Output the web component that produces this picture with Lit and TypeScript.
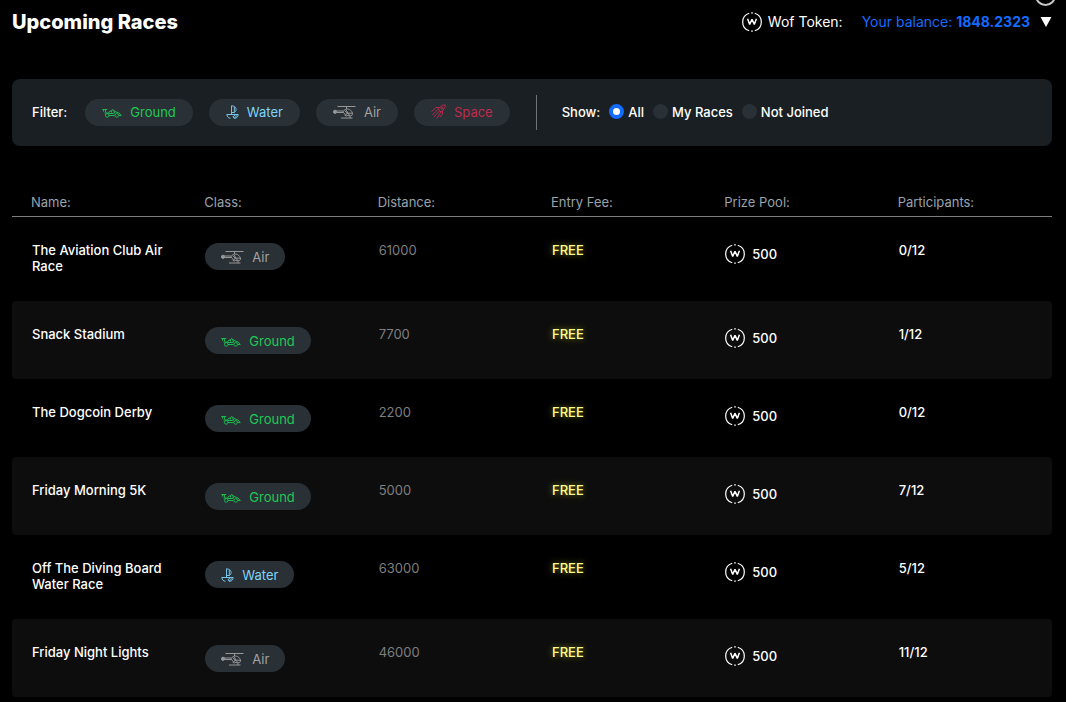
import { LitElement, html, css, svg } from "lit";
import { customElement, property, state } from "lit/decorators.js";

type RaceClass = "ground" | "water" | "air" | "space";

interface Race {
  name: string;
  kind: RaceClass;
  distance: number;
  prize: number;
  joined: number;
}

const LABELS: Record<RaceClass, string> = {
  ground: "Ground",
  water: "Water",
  air: "Air",
  space: "Space",
};

const RACES: Race[] = [
  { name: "The Aviation Club Air Race", kind: "air", distance: 61000, prize: 500, joined: 0 },
  { name: "Snack Stadium", kind: "ground", distance: 7700, prize: 500, joined: 1 },
  { name: "The Dogcoin Derby", kind: "ground", distance: 2200, prize: 500, joined: 0 },
  { name: "Friday Morning 5K", kind: "ground", distance: 5000, prize: 500, joined: 7 },
  { name: "Off The Diving Board Water Race", kind: "water", distance: 63000, prize: 500, joined: 5 },
  { name: "Friday Night Lights", kind: "air", distance: 46000, prize: 500, joined: 11 },
];

const ICONS = {
  ground: { w: 20, h: 14, art: svg`
    <path d="M0.3 4.5H5.2M1.5 4.5V6.5M3.2 4.8L3.8 7.5M2.5 8H6.5L8 6H9M9.5 7.5V5.5L11 4.5L13 6.5L17 8L19.2 10.5H17M7 10.5H12.5M6.5 8.5H11L13 7.8M11.5 5L12.5 8" />
    <circle cx="5.2" cy="10.4" r="1.8" /><circle cx="14.7" cy="10.4" r="1.8" />` },
  water: { w: 13, h: 14, art: svg`
    <path d="M5.5 0.8V9.3M5.5 0.8C11 1.2 11 5.5 8.5 7.5H5.5M8.3 1.8V7.5M0.8 9.5H12.2C12 12 10.5 13.2 9 13.2H8M0.8 9.5C1.2 12 2.5 13.2 4.5 13.2M7 11.5L9.5 10M8 13.2L11 10.5M7 11.5L8 13.2" />` },
  air: { w: 23, h: 14, art: svg`
    <path d="M4.5 1.5H22.5M13.5 1.5V4M2 6H10.5M3 7.5H10.5M8 13H19.5M11.5 10L13.5 11.2M17 10.8V13" />
    <path d="M10.2 6.5C12 3.5 15.5 3.5 17.5 5.2C19.5 7 20.2 9.2 18.8 10.3C15.5 11.5 11 10 10.2 6.5ZM13 4.8L15 8.2H19.2M15 8.2L12.8 9.2M12 6L17 10.5" />
    <circle cx="2" cy="6.8" r="1.6" fill="currentColor" />` },
  space: { w: 15, h: 15, art: svg`
    <path d="M14.3 0.8C11.8 0.8 9 2.5 7.2 5.2L10 8C12.8 6.2 14.3 3.3 14.3 0.8ZM7.2 5.2L1.2 11.2M10 8L5.8 14.5M8.6 6.8L2.8 13.2M8.3 3.5H5L0.4 7.8M11.5 7V10L9 13" />
    <circle cx="11" cy="4.2" r="1" />` },
};

const classIcon = (kind: RaceClass) => {
  const { w, h, art } = ICONS[kind];
  return html`<svg class="art" width=${w} height=${h} viewBox="0 0 ${w} ${h}" fill="none"
    stroke="currentColor" stroke-width="1" aria-hidden="true">${art}</svg>`;
};

const tokenIcon = html`<svg width="20" height="20" viewBox="0 0 20 20" fill="none" stroke="#fff" aria-hidden="true">
  <path d="M12.8 1.2A9.2 9.2 0 0 1 12.8 18.8M7.2 18.8A9.2 9.2 0 0 1 7.2 1.2" stroke-width="1.2" />
  <path d="M9.2 0.9H10.8M9.2 19.1H10.8" stroke-width="1.4" />
  <path d="M5.6 6.8L7.7 12.4L10 7.2L12.3 12.4L14.4 6.8" stroke-width="1.5" stroke-linejoin="bevel" />
</svg>`;

const pillStyles = css`
  .pill {
    display: inline-flex;
    align-items: center;
    gap: 8px;
    box-sizing: border-box;
    height: 27px;
    padding: 0 16px;
    border: 0;
    border-radius: 14px;
    background: #293036;
    font: 400 13px/16px Inter, sans-serif;
    vertical-align: top;
  }
  .art { flex: none; opacity: 0.9; }
  .ground { color: #1dc955; }
  .water { color: #7fd4fa; }
  .air { color: #a3a3a3; }
  .space { color: #c02a4e; }
`;

@customElement("race-filters")
class RaceFilters extends LitElement {
  @state() private show = "All";

  static styles = [pillStyles, css`
    :host { display: block; }
    .bar {
      display: flex;
      flex-wrap: wrap;
      align-items: center;
      padding: 16px 20px;
      border-radius: 8px;
      background: #1a1f23;
      color: #fff;
      font: 500 13px/16px Inter, sans-serif;
    }
    .group { display: flex; flex-wrap: wrap; align-items: center; gap: 16px; }
    .title { margin-right: 2px; padding-bottom: 2px; }
    .pill { cursor: pointer; padding: 0 17px 2px; }
    .show {
      display: flex;
      align-items: center;
      gap: 9px;
      box-sizing: border-box;
      margin: 0 0 0 26px;
      padding: 0 0 2px 25px;
      min-height: 35px;
      border-left: 1px solid #6f7375;
    }
    .choice { display: flex; align-items: center; gap: 4px; }
    .radio {
      appearance: none;
      box-sizing: border-box;
      width: 15px;
      height: 15px;
      margin: 0;
      border-radius: 50%;
      background: #293036;
    }
    .radio:checked { background: #fff; border: 4px solid #146bff; }
  `];

  render() {
    return html`
      <section class="bar" aria-label="Race filters">
        <div class="group">
          <span class="title">Filter:</span>
          ${(Object.keys(LABELS) as RaceClass[]).map(
            (kind) => html`<button class="pill ${kind}" type="button">${classIcon(kind)}${LABELS[kind]}</button>`
          )}
        </div>
        <div class="show" role="radiogroup" aria-labelledby="show-title">
          <span id="show-title">Show:</span>
          ${["All", "My Races", "Not Joined"].map(
            (label) => html`<label class="choice">
              <input class="radio" type="radio" name="show" .checked=${this.show === label}
                @change=${() => (this.show = label)} />${label}
            </label>`
          )}
        </div>
      </section>
    `;
  }
}

@customElement("race-table")
class RaceTable extends LitElement {
  @property({ attribute: false }) races: Race[] = [];

  static styles = [pillStyles, css`
    :host { display: block; }
    .races {
      width: 100%;
      table-layout: fixed;
      border-collapse: separate;
      border-spacing: 0;
      color: #fff;
      font: 500 13px/16px Inter, sans-serif;
    }
    .head {
      padding: 0 0 6px 19px;
      border-bottom: 1px solid #7d7d7d;
      color: #98a3ac;
      font-weight: 400;
      text-align: left;
    }
    .cell { padding: 25px 20px 27px; vertical-align: top; }
    .cell.class { padding: 26px 20px 25px; }
    .cell.pool { padding-top: 27px; }
    .row:nth-child(even) .cell { background: #0d0d0d; }
    .row .cell:first-child { border-radius: 4px 0 0 4px; }
    .row .cell:last-child { border-radius: 0 4px 4px 0; }
    .distance { color: #7e7e7e; font-weight: 400; }
    .fee { color: #ffff8c; text-shadow: 0 0 6px #8c8c22; }
    .prize { display: flex; align-items: center; gap: 7px; }
  `];

  render() {
    return html`
      <table class="races">
        <thead>
          <tr>
            ${["Name:", "Class:", "Distance:", "Entry Fee:", "Prize Pool:", "Participants:"].map(
              (title) => html`<th class="head" scope="col">${title}</th>`
            )}
          </tr>
        </thead>
        <tbody>
          ${this.races.map(
            (race) => html`<tr class="row">
              <td class="cell">${race.name}</td>
              <td class="cell class"><span class="pill ${race.kind}">${classIcon(race.kind)}${LABELS[race.kind]}</span></td>
              <td class="cell distance">${race.distance}</td>
              <td class="cell fee">FREE</td>
              <td class="cell pool"><span class="prize">${tokenIcon}${race.prize}</span></td>
              <td class="cell">${race.joined}/12</td>
            </tr>`
          )}
        </tbody>
      </table>
    `;
  }
}

@customElement("app-root")
class AppRoot extends LitElement {
  static styles = css`
    :host {
      display: block;
      position: relative;
      box-sizing: border-box;
      min-height: 100vh;
      padding: 8px 14px 5px 12px;
      overflow: hidden;
      background: #000;
      color: #fff;
      font: 400 14px/20px Inter, sans-serif;
    }
    .top { display: flex; justify-content: space-between; align-items: center; margin-bottom: 43px; }
    .heading { margin: 0; font-size: 20px; line-height: 28px; font-weight: 800; }
    .wallet { display: flex; align-items: center; gap: 19px; }
    .token { display: flex; align-items: center; gap: 6px; }
    .balance {
      display: flex;
      align-items: center;
      gap: 10px;
      padding: 0;
      border: 0;
      background: none;
      color: #146bff;
      font: inherit;
      cursor: pointer;
    }
    .amount { font-weight: 700; }
    .ring {
      position: absolute;
      top: -15px;
      right: 10px;
      box-sizing: border-box;
      width: 21px;
      height: 21px;
      border: 2px solid #c8c8c8;
      border-radius: 50%;
    }
    .filters { margin-bottom: 48px; }
  `;

  render() {
    return html`
      <span class="ring"></span>
      <header class="top">
        <h1 class="heading">Upcoming Races</h1>
        <div class="wallet">
          <span class="token">${tokenIcon}Wof Token:</span>
          <button class="balance" type="button">
            <span>Your balance: <span class="amount">1848.2323</span></span>
            <svg width="12" height="10" viewBox="0 0 12 10" aria-hidden="true"><path d="M0.5 0H11.5L6 10Z" fill="#fff" /></svg>
          </button>
        </div>
      </header>
      <race-filters class="filters"></race-filters>
      <race-table .races=${RACES}></race-table>
    `;
  }
}
